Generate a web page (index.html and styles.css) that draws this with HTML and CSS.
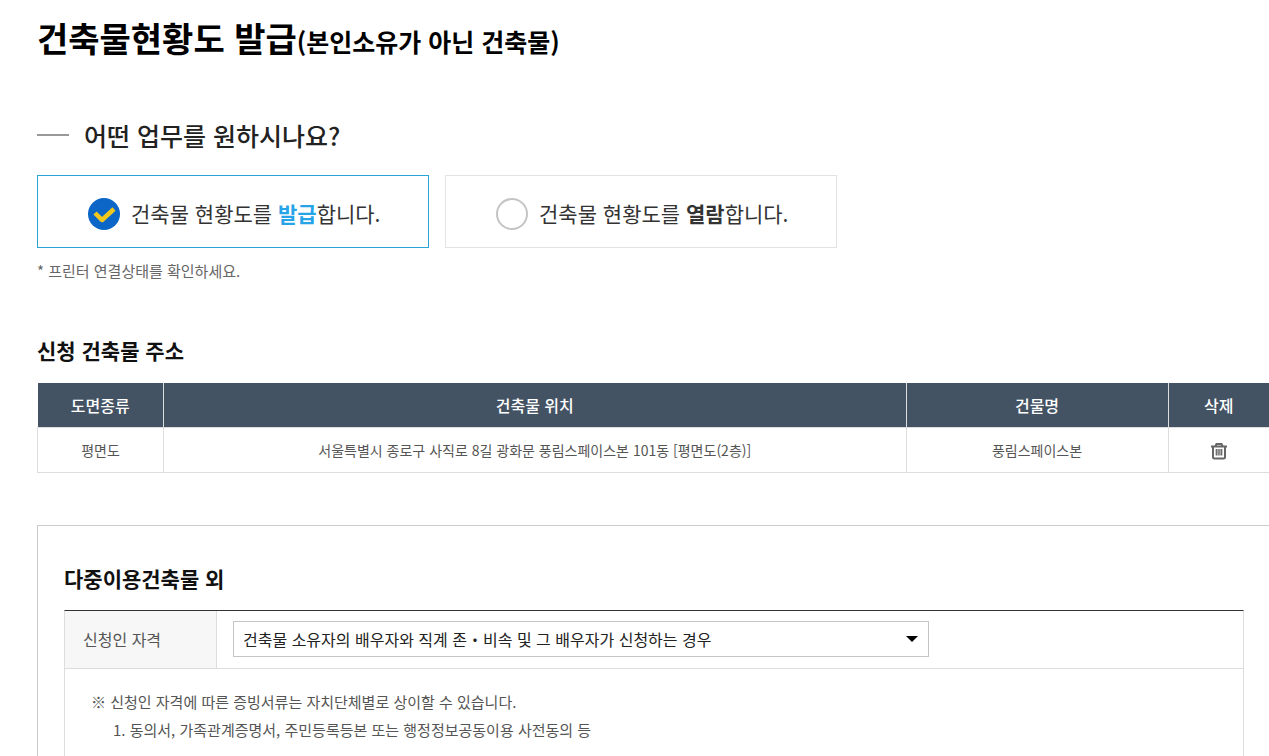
FILE: index.html
```html
<!DOCTYPE html>
<html lang="ko">
<head>
    <meta charset="UTF-8">
    <meta name="viewport" content="width=device-width, initial-scale=1.0">
    <title>건축물현황도 발급</title>
    <link rel="stylesheet" href="styles.css">
</head>
<body>
    <main class="content">
        <h1 class="page-title">건축물현황도 발급<small>(본인소유가 아닌 건축물)</small></h1>

        <h2 class="question">어떤 업무를 원하시나요?</h2>
        <div class="choice-list">
            <label class="choice">
                <input type="radio" name="work" value="issue" checked>
                <span class="mark">
                    <svg viewBox="0 0 32 32" width="32" height="32"><path d="M7 15l7 7L26 11" fill="none" stroke="#f3c81c" stroke-width="4.500" stroke-linejoin="round"/></svg>
                </span>
                <span class="choice-text">건축물 현황도를 <b>발급</b>합니다.</span>
            </label>
            <label class="choice">
                <input type="radio" name="work" value="view">
                <span class="mark"></span>
                <span class="choice-text">건축물 현황도를 <b>열람</b>합니다.</span>
            </label>
        </div>
        <p class="notice">* 프린터 연결상태를 확인하세요.</p>

        <h3 class="sub-title">신청 건축물 주소</h3>
        <table class="address-table">
            <colgroup>
                <col class="col-type">
                <col class="col-place">
                <col class="col-name">
                <col class="col-delete">
            </colgroup>
            <thead>
                <tr>
                    <th>도면종류</th>
                    <th>건축물 위치</th>
                    <th>건물명</th>
                    <th>삭제</th>
                </tr>
            </thead>
            <tbody>
                <tr>
                    <td>평면도</td>
                    <td>서울특별시 종로구 사직로 8길 광화문 풍림스페이스본 101동 [평면도(2층)]</td>
                    <td>풍림스페이스본</td>
                    <td>
                        <button type="button" class="delete-btn" aria-label="삭제">
                            <svg viewBox="0 0 18 18" width="18" height="18" fill="none" stroke="#666">
                                <path stroke-width="2" d="M1 4.500h16M5.500 4l1-2h5l1 2M3 4.500v10.500q0 1.500 1.500 1.500h9q1.500 0 1.500-1.500V4.500"/>
                                <path stroke-width="1.300" d="M6.300 7v6.500M8.100 7v6.500M9.900 7v6.500M11.700 7v6.500"/>
                            </svg>
                        </button>
                    </td>
                </tr>
            </tbody>
        </table>

        <section class="apply-box">
            <h3 class="sub-title">다중이용건축물 외</h3>
            <div class="form-box">
                <div class="form-row">
                    <label class="form-label" for="qualification">신청인 자격</label>
                    <div class="form-field">
                        <div class="select-wrap">
                            <select id="qualification">
                                <option>건축물 소유자의 배우자와 직계 존・비속 및 그 배우자가 신청하는 경우</option>
                            </select>
                        </div>
                    </div>
                </div>
                <div class="guide">
                    <p>※ 신청인 자격에 따른 증빙서류는 자치단체별로 상이할 수 있습니다.</p>
                    <p class="guide-item">1. 동의서, 가족관계증명서, 주민등록등본 또는 행정정보공동이용 사전동의 등</p>
                </div>
            </div>
        </section>
    </main>
</body>
</html>
```
FILE: styles.css
```css
* {
    box-sizing: border-box;
}
body {
    margin: 0;
    background-color: #fff;
    color: #555;
    font-family: "Noto Sans CJK KR", sans-serif;
    font-size: 15px;
}
h1, h2, h3, p {
    margin: 0;
}
.content {
    display: flex;
    flex-direction: column;
    min-height: 100vh;
    padding: 12px 0 0 37px;
}
.page-title {
    color: #000;
    font-size: 34px;
    line-height: 52px;
    font-weight: 700;
}
.page-title small {
    font-size: 25px;
}
.question {
    display: flex;
    align-items: center;
    gap: 15px;
    margin-top: 50px;
    color: #222;
    font-size: 25px;
    line-height: 36px;
    font-weight: 500;
}
.question::before {
    content: "";
    width: 32px;
    height: 2px;
    background-color: #999;
}
.choice-list {
    display: flex;
    gap: 16px;
    margin-top: 22px;
}
.choice {
    display: flex;
    align-items: center;
    gap: 11px;
    width: 392px;
    height: 73px;
    padding: 5px 20px 0 50px;
    border: 1px solid #e3e3e3;
    color: #333;
    font-size: 21px;
    line-height: 32px;
    cursor: pointer;
}
.choice:has(input:checked) {
    border-color: #2ba3d4;
}
.choice input {
    position: absolute;
    opacity: 0;
}
.mark {
    width: 32px;
    height: 32px;
    border: 2px solid #c4c4c4;
    border-radius: 50%;
}
.choice input:checked + .mark {
    border: none;
    background-color: #0b66c8;
}
.mark svg {
    display: block;
}
.choice-text {
    padding-bottom: 3px;
}
.choice input:checked ~ .choice-text b {
    color: #27a3e8;
}
.notice {
    margin-top: 12px;
    color: #666;
    line-height: 22px;
}
.sub-title {
    color: #111;
    font-size: 21px;
    line-height: 28px;
    font-weight: 700;
}
.notice + .sub-title {
    margin-top: 54px;
}
.address-table {
    width: 100%;
    margin-top: 19px;
    border-collapse: collapse;
    table-layout: fixed;
    text-align: center;
}
.col-type {
    width: 126px;
}
.col-name {
    width: 262px;
}
.col-delete {
    width: 101px;
}
.address-table th {
    height: 44px;
    padding: 0;
    border-right: 1px solid #ddd;
    background-color: #435363;
    color: #fff;
    font-size: 16px;
    font-weight: 500;
}
.address-table td {
    height: 45px;
    padding: 0;
    border: 1px solid #ddd;
    font-size: 14px;
}
.address-table th:last-child, .address-table td:last-child {
    border-right: none;
}
.delete-btn {
    display: inline-block;
    padding: 0;
    border: none;
    background: none;
    vertical-align: middle;
    cursor: pointer;
}
.delete-btn svg {
    display: block;
}
.apply-box {
    display: flex;
    flex: 1;
    flex-direction: column;
    margin-top: 52px;
    padding: 38px 25px 0 26px;
    border: solid #ccc;
    border-width: 1px 0 0 1px;
}
.form-box {
    flex: 1;
    margin-top: 18px;
    border: 1px solid #ddd;
    border-top-color: #333;
    border-bottom: none;
}
.form-row {
    display: flex;
    border-bottom: 1px solid #ddd;
}
.form-label {
    display: flex;
    align-items: center;
    width: 152px;
    padding-left: 18px;
    border-right: 1px solid #ddd;
    background-color: #f7f7f7;
    font-size: 16px;
}
.form-field {
    flex: 1;
    padding: 10px 16px 11px;
}
.select-wrap {
    position: relative;
    max-width: 696px;
}
/* dropdown arrow */
.select-wrap::after {
    content: "";
    position: absolute;
    top: 15px;
    right: 11px;
    border: solid transparent;
    border-width: 6px 6px 0;
    border-top-color: #000;
    pointer-events: none;
}
.select-wrap select {
    display: block;
    width: 100%;
    height: 36px;
    padding: 0 9px;
    border: 1px solid #c4c4c4;
    border-radius: 0;
    background-color: #fff;
    color: #222;
    font-family: inherit;
    font-size: 16px;
    appearance: none;
}
.guide {
    padding: 19px 26px 0;
    line-height: 28px;
}
.guide-item {
    padding-left: 22px;
}
```
